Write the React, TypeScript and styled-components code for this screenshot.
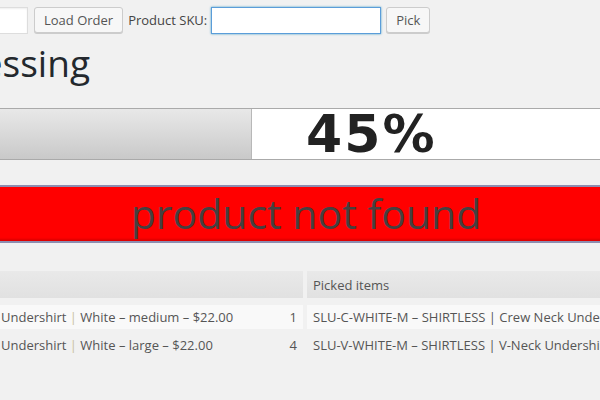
import React from "react";
import styled, { createGlobalStyle } from "styled-components";

const GlobalStyle = createGlobalStyle`
    html, body {
        margin: 0;
        padding: 0;
        background: #f1f1f1;
        overflow: hidden;
    }
    body {
        font-family: "Open Sans", "Noto Sans", sans-serif;
        color: #444;
        width: 600px;
        height: 400px;
    }
`;

interface OrderLine {
    name: string;
    qty: number;
    picked: string;
    sep: string;
}

const lines: OrderLine[] = [
    {
        name: "Undershirt",
        sep: "White – medium – $22.00",
        qty: 1,
        picked: "SLU-C-WHITE-M – SHIRTLESS | Crew Neck Undershirt | White – medium – $22.00",
    },
    {
        name: "Undershirt",
        sep: "White – large – $22.00",
        qty: 4,
        picked: "SLU-V-WHITE-M – SHIRTLESS | V-Neck Undershirt | White – large – $22.00",
    },
];

const progress = 45;

export default function App() {
    return (
        <>
            <GlobalStyle />
            <Page>
                <Toolbar>
                    <OrderInput type="text" />
                    <Button>Load Order</Button>
                    <Label>Product SKU:</Label>
                    <SkuInput type="text" />
                    <Button>Pick</Button>
                </Toolbar>
                <Title>
                    <span>Order Processing</span>
                </Title>
                <Progress>
                    <Fill />
                    <Remaining />
                    <Percent>{progress}%</Percent>
                </Progress>
                <Alert>product not found</Alert>
                <Table>
                    <HeadCell />
                    <HeadCell>Picked items</HeadCell>
                    {lines.map((line, i) => (
                        <React.Fragment key={i}>
                            <Cell $odd={i % 2 === 0} $first>
                                <span>
                                    {line.name} <Pipe>|</Pipe> {line.sep}
                                </span>
                                <span>{line.qty}</span>
                            </Cell>
                            <Cell $odd={i % 2 === 0}>
                                <span>{line.picked}</span>
                            </Cell>
                        </React.Fragment>
                    ))}
                </Table>
            </Page>
        </>
    );
}

const Page = styled.div`
    display: flex;
    flex-direction: column;
    padding-top: 6px;
`;

const Toolbar = styled.div`
    display: flex;
    align-items: center;
    height: 28px;
`;

const OrderInput = styled.input`
    box-sizing: border-box;
    width: 90px;
    height: 27px;
    margin: 1px 6px 0 -62px;
    border: 1px solid #ddd;
    background: #fff;
    box-shadow: inset 0 1px 2px rgba(0, 0, 0, 0.07);
    outline: none;
`;

const Button = styled.button`
    box-sizing: border-box;
    height: 26px;
    padding: 0 9px;
    margin-right: 5px;
    border: 1px solid #ccc;
    border-radius: 3px;
    background: #f7f7f7;
    box-shadow: 0 1px 0 #ccc;
    color: #555;
    font-family: "Open Sans", sans-serif;
    font-size: 13px;
    line-height: 24px;
    cursor: pointer;
`;

const Label = styled.span`
    font-size: 13px;
    color: #444;
    margin-right: 4px;
`;

const SkuInput = styled.input`
    box-sizing: border-box;
    width: 170px;
    height: 27px;
    margin: 1px 5px 0 0;
    border: 1px solid #5b9dd9;
    background: #fff;
    box-shadow: 0 0 2px rgba(30, 140, 190, 0.8);
    outline: none;
`;

const Title = styled.h1`
    display: flex;
    justify-content: flex-end;
    width: 90px;
    margin: 5px 0 0;
    font-size: 37px;
    font-weight: 400;
    line-height: 48px;
    color: #23282d;
    white-space: nowrap;
`;

const Progress = styled.div`
    position: relative;
    display: flex;
    box-sizing: border-box;
    height: 52px;
    margin: 21px -20px 0;
    border: 1px solid #aaa;
    background: #fff;
`;

const Fill = styled.div`
    width: 270px;
    border-right: 1px solid #b8b8b8;
    background: linear-gradient(#e8e8e8, #dcdcdc 40%, #c9c9c9);
`;

const Remaining = styled.div`
    flex: 1;
    background: #fff;
`;

const Percent = styled.span`
    position: absolute;
    left: 325px;
    top: 50%;
    transform: translateY(-50%);
    font-family: "DejaVu Sans", sans-serif;
    font-weight: 700;
    font-size: 52px;
    letter-spacing: 2px;
    line-height: 1;
    color: #222;
`;

const Alert = styled.div`
    box-sizing: border-box;
    height: 58px;
    width: 632px;
    margin: 25px 0 0 -10px;
    border-top: 2px solid #8d8db0;
    border-bottom: 2px solid #8d8db0;
    background: #ff0000;
    box-shadow: inset 0 -2px 2px rgba(120, 0, 0, 0.25);
    text-align: center;
    font-size: 41px;
    line-height: 52px;
    color: #454040;
`;

const Table = styled.div`
    display: grid;
    grid-template-columns: 303px 1fr;
    grid-template-rows: 30px 24px 24px;
    column-gap: 4px;
    row-gap: 4px;
    margin-top: 28px;
    font-size: 13px;
    color: #555;
`;

const HeadCell = styled.div`
    display: flex;
    align-items: center;
    padding: 0 6px;
    margin-bottom: 3px;
    background: linear-gradient(#e9e9e9, #e1e1e1);
    white-space: nowrap;
`;

const Cell = styled.div<{ $odd: boolean; $first?: boolean }>`
    display: flex;
    align-items: center;
    justify-content: space-between;
    padding: 0 6px 0 ${(p) => (p.$first ? "1px" : "6px")};
    background: ${(p) => (p.$odd ? "#f9f9f9" : "#f1f1f1")};
    white-space: nowrap;
    overflow: hidden;
`;

const Pipe = styled.span`
    color: #c9c09a;
`;
